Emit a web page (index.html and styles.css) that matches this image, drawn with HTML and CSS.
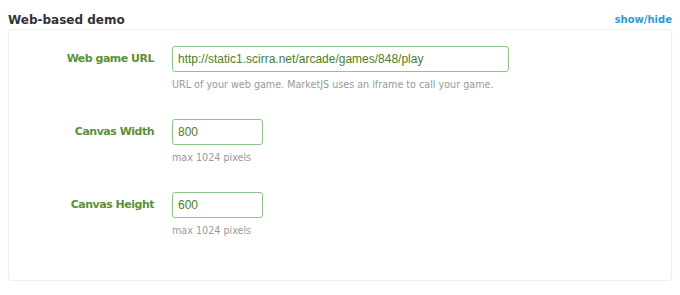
FILE: index.html
```html
<!DOCTYPE html>
<html lang="en">
<head>
    <meta charset="UTF-8">
    <title>Web-based demo</title>
    <link rel="stylesheet" href="styles.css">
</head>
<body>
    <div class="sectionHead">
        <div class="sectionTitle">Web-based demo</div>
        <a class="toggle" href="#">show/hide</a>
    </div>
    <div class="sectionBox">
        <div class="field">
            <label class="fieldLabel">Web game URL</label>
            <div class="fieldBody">
                <input class="textInput wide" type="text" value="http://static1.scirra.net/arcade/games/848/play">
                <div class="hint">URL of your web game. MarketJS uses an iframe to call your game.</div>
            </div>
        </div>
        <div class="field">
            <label class="fieldLabel">Canvas Width</label>
            <div class="fieldBody">
                <input class="textInput short" type="text" value="800">
                <div class="hint">max 1024 pixels</div>
            </div>
        </div>
        <div class="field">
            <label class="fieldLabel">Canvas Height</label>
            <div class="fieldBody">
                <input class="textInput short" type="text" value="600">
                <div class="hint">max 1024 pixels</div>
            </div>
        </div>
    </div>
</body>
</html>
```

FILE: styles.css
```css
body{
    margin: 0;
    background-color: #fff;
    font-family: "DejaVu Sans", sans-serif;
}
.sectionHead{
    display: flex;
    justify-content: space-between;
    align-items: center;
    padding: 10px 8px 0 8px;
    height: 19px;
}
.sectionTitle{
    font-size: 12px;
    font-weight: bold;
    color: #333;
}
.toggle{
    font-size: 10px;
    font-weight: bold;
    color: #2b9ad6;
    text-decoration: none;
}
.sectionBox{
    margin: 0 8px;
    height: 252px;
    box-sizing: border-box;
    padding-top: 16px;
    border: 1px solid #efefef;
    border-radius: 4px;
    box-shadow: 0 1px 2px rgba(0,0,0,0.04);
}
.field{
    display: grid;
    grid-template-columns: 145px 1fr;
    column-gap: 18px;
    margin-bottom: 27px;
}
.fieldLabel{
    text-align: right;
    font-size: 11px;
    font-weight: bold;
    letter-spacing: -0.5px;
    color: #5b9138;
    line-height: 26px;
}
.textInput{
    display: block;
    box-sizing: border-box;
    height: 26px;
    padding: 0 5px;
    border: 1px solid #8cc48a;
    border-radius: 3px;
    font-family: "Liberation Sans", sans-serif;
    font-size: 12px;
    color: #4e7d27;
    outline: none;
}
.wide{
    width: 337px;
}
.short{
    width: 91px;
}
.hint{
    margin-top: 6px;
    font-size: 9.6px;
    line-height: 14px;
    color: #999;
}
```
